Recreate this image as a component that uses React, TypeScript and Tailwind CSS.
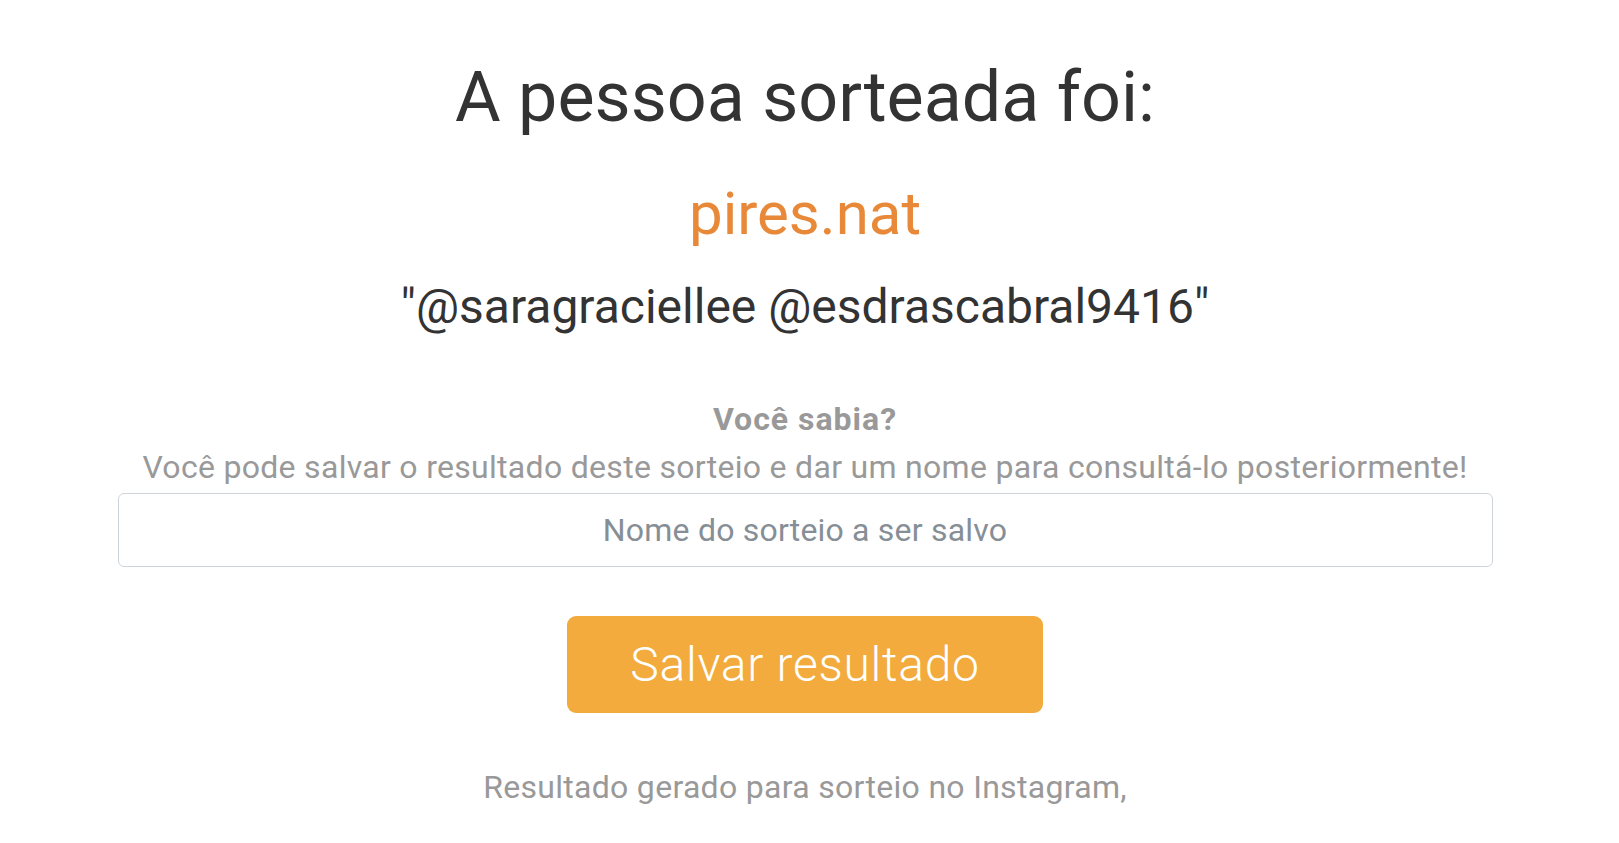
import React from "react";

export default function App() {
  return (
    <div className="min-h-[843px] w-full bg-white" style={{ fontFamily: "Roboto, 'Liberation Sans', sans-serif" }}>
      <div className="w-[1610px] flex flex-col items-center text-center">
        <h1 className="mt-[55px] text-[70px] leading-[84px] font-normal text-[#333333]">
          A pessoa sorteada foi:
        </h1>
        <div className="mt-[39px] text-[60px] leading-[72px] text-[#e8893a]">pires.nat</div>
        <div className="mt-[28px] text-[48px] leading-[58px] text-[#333333]">
          "@saragraciellee @esdrascabral9416"
        </div>
        <div className="mt-[60px] text-[32px] leading-[47px] font-bold tracking-[1px] text-[#999999]">Você sabia?</div>
        <div className="text-[32px] leading-[48px] tracking-[0.3px] text-[#999999]">
          Você pode salvar o resultado deste sorteio e dar um nome para consultá-lo posteriormente!
        </div>
        <input
          type="text"
          placeholder="Nome do sorteio a ser salvo"
          className="mt-[2px] w-[1375px] h-[74px] rounded-[6px] border border-[#ced4da] bg-white text-center text-[32px] tracking-[0.2px] text-[#495057] placeholder:text-[#868e96] outline-none"
        />
        <button className="mt-[49px] w-[476px] h-[97px] rounded-[9px] bg-[#f2ab3c] text-white text-[48px] font-light tracking-[0.7px]">
          Salvar resultado
        </button>
        <div className="mt-[52px] text-[32px] leading-[45px] tracking-[0.3px] text-[#999999]">
          Resultado gerado para sorteio no Instagram,
        </div>
      </div>
    </div>
  );
}
